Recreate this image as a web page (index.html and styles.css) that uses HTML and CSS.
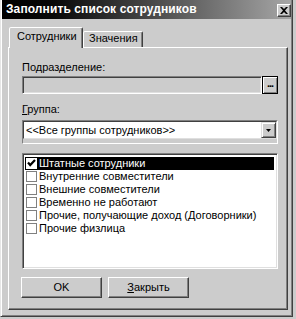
FILE: index.html
```html
<!DOCTYPE html>
<html lang="ru">
<head>
<meta charset="utf-8">
<title>Заполнить список сотрудников</title>
<link rel="stylesheet" href="styles.css">
</head>
<body>
<div class="window">
  <div class="titlebar">
    <span class="title">Заполнить список сотрудников</span>
    <span class="close"><svg width="8" height="7" viewBox="0 0 8 7"><path d="M0 0h2l2 2 2-2h2L5 3.5 8 7H6L4 5 2 7H0l3-3.5z" fill="#000"/></svg></span>
  </div>
  <div class="tabs">
    <div class="tab active">Сотрудники</div>
    <div class="tab inactive">Значения</div>
  </div>
  <div class="panel">
    <div class="label">Подразделение:</div>
    <div class="row">
      <div class="edit"></div>
      <div class="dots">...</div>
    </div>
    <div class="label label2"><u>Г</u>руппа:</div>
    <div class="comboframe">
      <div class="combo">
        <span class="combotext">&lt;&lt;Все группы сотрудников&gt;&gt;</span>
        <span class="drop"><svg width="5" height="3" viewBox="0 0 5 3"><path d="M0 0h5L2.5 3z" fill="#000"/></svg></span>
      </div>
    </div>
    <div class="list">
      <div class="item sel"><span class="cb on"><svg width="9" height="9" viewBox="0 0 9 9"><path d="M1 3.5l2.2 2.5L8 1" fill="none" stroke="#000" stroke-width="2.2"/></svg></span>Штатные сотрудники</div>
      <div class="item"><span class="cb"></span>Внутренние совместители</div>
      <div class="item"><span class="cb"></span>Внешние совместители</div>
      <div class="item"><span class="cb"></span>Временно не работают</div>
      <div class="item"><span class="cb"></span>Прочие, получающие доход (Договорники)</div>
      <div class="item"><span class="cb"></span>Прочие физлица</div>
    </div>
    <div class="buttons">
      <div class="btn">OK</div>
      <div class="btn"><u>З</u>акрыть</div>
    </div>
  </div>
</div>
</body>
</html>
```
FILE: styles.css
```css
* { box-sizing: border-box; }
html, body { margin: 0; padding: 0; }
body {
  width: 296px;
  height: 319px;
  background: #cccccc;
  font-family: "Liberation Sans", Arial, sans-serif;
  font-size: 11px;
  color: #000;
  overflow: hidden;
}
.window {
  width: 293px;
  height: 317px;
  border-left: 1px solid #e6e6e6;
  border-right: 1px solid #404040;
  border-bottom: 1px solid #404040;
  box-shadow: inset 1px 0 #fff, inset -1px -1px #808080;
  padding: 0 1px 6px 1px;
  display: flex;
  flex-direction: column;
}
.titlebar {
  height: 19px;
  flex: none;
  background: linear-gradient(to right, #000 0%, #080808 18%, #a6a6a6 100%);
  display: flex;
  justify-content: space-between;
  padding-left: 4px;
  color: #fff;
  font-weight: bold;
  font-size: 12px;
}
.title { line-height: 19px; letter-spacing: 0.1px; }
.close {
  width: 14px;
  height: 13px;
  margin-top: 4px;
  background: #cccccc;
  border: 1px solid;
  border-color: #fff #404040 #404040 #fff;
  box-shadow: inset -1px -1px #808080;
  display: flex;
  align-items: center;
  justify-content: center;
}
.tabs {
  height: 28px;
  flex: none;
  display: flex;
  align-items: flex-end;
  padding-left: 7px;
}
.tab {
  border: 1px solid;
  border-bottom: none;
  border-color: #fff #404040 transparent #fff;
  box-shadow: inset -1px 0 #808080;
  border-radius: 2px 2px 0 0;
  line-height: 13px;
  background: #cccccc;
}
.tab.active {
  width: 74px;
  height: 21px;
  margin-bottom: -1px;
  padding: 2px 0 0 7px;
  position: relative;
  z-index: 1;
}
.tab.inactive {
  width: 60px;
  height: 16px;
  padding: 0 0 0 5px;
}
.panel {
  margin-left: 6px;
  width: 280px;
  height: 263px;
  border: 1px solid;
  border-color: #fff #404040 #404040 #fff;
  box-shadow: inset -1px -1px #808080;
  padding: 13px 0 0 13px;
}
.label { line-height: 13px; height: 13px; }
.label2 { margin-top: 9px; }
.row { display: flex; margin-top: 2px; height: 18px; }
.edit {
  width: 240px;
  height: 18px;
  border: 1px solid;
  border-color: #808080 #fff #fff #808080;
  box-shadow: inset 1px 1px #404040, inset -1px -1px #dfdfdf;
  background: #cccccc;
}
.dots {
  width: 16px;
  height: 18px;
  border: 1px solid #000;
  box-shadow: inset 1px 1px #fff, inset -1px -1px #808080;
  background: #cccccc;
  font-weight: bold;
  line-height: 13px;
  text-align: center;
  letter-spacing: -1px;
}
.comboframe {
  margin-top: 4px;
  width: 256px;
  height: 24px;
  border: 1px solid;
  border-color: #808080 #fff #fff #808080;
}
.combo {
  height: 18px;
  background: #fff;
  border: 1px solid;
  border-color: #404040 #dfdfdf #dfdfdf #404040;
  display: flex;
  justify-content: space-between;
}
.combotext { line-height: 16px; padding-left: 2px; }
.drop {
  width: 15px;
  height: 16px;
  background: #cccccc;
  border: 1px solid;
  border-color: #dfdfdf #404040 #404040 #dfdfdf;
  box-shadow: inset 1px 1px #fff, inset -1px -1px #808080;
  display: flex;
  align-items: center;
  justify-content: center;
}
.list {
  margin-top: 9px;
  width: 256px;
  height: 116px;
  border: 1px solid;
  border-color: #808080 #fff #fff #808080;
  box-shadow: inset 1px 1px #404040, inset -1px -1px #dfdfdf;
  background: #fff;
  padding: 3px 3px 0 2px;
}
.item {
  height: 13px;
  line-height: 13px;
  display: flex;
  align-items: center;
  padding-left: 1px;
  white-space: nowrap;
}
.item.sel { background: #000; color: #fff; }
.cb {
  width: 11px;
  height: 11px;
  border: 1px solid #808080;
  background: #fff;
  margin-right: 2px;
  flex: none;
  display: flex;
  align-items: center;
  justify-content: center;
}
.cb.on { border-color: #fff; }
.buttons {
  margin-top: 8px;
  margin-left: -1px;
  display: flex;
  gap: 6px;
}
.btn {
  width: 81px;
  height: 21px;
  border: 1px solid;
  border-color: #fff #404040 #404040 #fff;
  box-shadow: inset -1px -1px #808080;
  text-align: center;
  line-height: 19px;
}
```
